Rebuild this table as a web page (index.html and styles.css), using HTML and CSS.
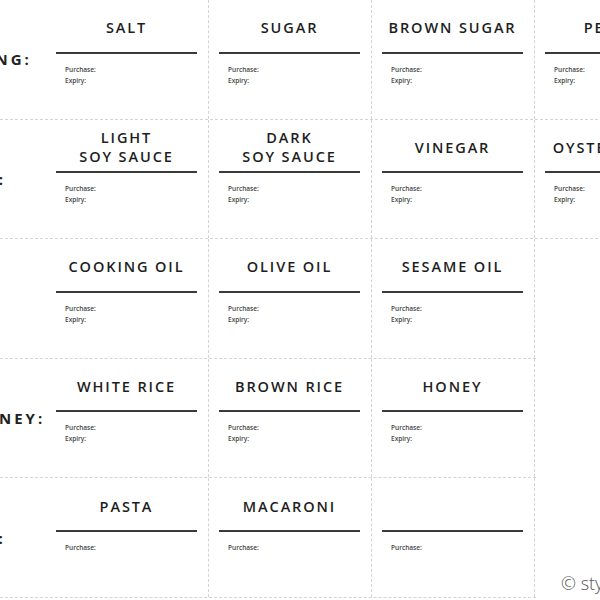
FILE: index.html
```html
<!DOCTYPE html>
<html>
<head>
<meta charset="utf-8">
<link rel="stylesheet" href="styles.css">
</head>
<body>
<div class="sheet">
  <div class="row">
    <div class="cat">SEASONING:</div>
    <div class="cell"><div class="title">SALT</div><div class="rule"></div><div class="meta">Purchase:<br>Expiry:</div></div>
    <div class="cell"><div class="title">SUGAR</div><div class="rule"></div><div class="meta">Purchase:<br>Expiry:</div></div>
    <div class="cell"><div class="title">BROWN SUGAR</div><div class="rule"></div><div class="meta">Purchase:<br>Expiry:</div></div>
    <div class="cell"><div class="title">PEPPER</div><div class="rule"></div><div class="meta">Purchase:<br>Expiry:</div></div>
  </div>
  <div class="row">
    <div class="cat">SAUCE:</div>
    <div class="cell"><div class="title">LIGHT<br>SOY SAUCE</div><div class="rule"></div><div class="meta">Purchase:<br>Expiry:</div></div>
    <div class="cell"><div class="title">DARK<br>SOY SAUCE</div><div class="rule"></div><div class="meta">Purchase:<br>Expiry:</div></div>
    <div class="cell"><div class="title">VINEGAR</div><div class="rule"></div><div class="meta">Purchase:<br>Expiry:</div></div>
    <div class="cell"><div class="title">OYSTER SAUCE</div><div class="rule"></div><div class="meta">Purchase:<br>Expiry:</div></div>
  </div>
  <div class="row short">
    <div class="cat">OIL:</div>
    <div class="cell"><div class="title">COOKING OIL</div><div class="rule"></div><div class="meta">Purchase:<br>Expiry:</div></div>
    <div class="cell"><div class="title">OLIVE OIL</div><div class="rule"></div><div class="meta">Purchase:<br>Expiry:</div></div>
    <div class="cell"><div class="title">SESAME OIL</div><div class="rule"></div><div class="meta">Purchase:<br>Expiry:</div></div>
  </div>
  <div class="row short">
    <div class="cat">RICE &amp; HONEY:</div>
    <div class="cell"><div class="title">WHITE RICE</div><div class="rule"></div><div class="meta">Purchase:<br>Expiry:</div></div>
    <div class="cell"><div class="title">BROWN RICE</div><div class="rule"></div><div class="meta">Purchase:<br>Expiry:</div></div>
    <div class="cell"><div class="title">HONEY</div><div class="rule"></div><div class="meta">Purchase:<br>Expiry:</div></div>
  </div>
  <div class="row short">
    <div class="cat">PASTA:</div>
    <div class="cell"><div class="title">PASTA</div><div class="rule"></div><div class="meta">Purchase:</div></div>
    <div class="cell"><div class="title">MACARONI</div><div class="rule"></div><div class="meta">Purchase:</div></div>
    <div class="cell"><div class="title"></div><div class="rule"></div><div class="meta">Purchase:</div></div>
  </div>
</div>
<div class="credit">© stylishcravings</div>
</body>
</html>
```
FILE: styles.css
```css
html, body {
  margin: 0;
  padding: 0;
  width: 600px;
  height: 600px;
  overflow: hidden;
  background: #fff;
}
body {
  position: relative;
  font-family: "Open Sans", "Liberation Sans", sans-serif;
  color: #222;
}
.sheet {
  display: flex;
  flex-direction: column;
}
.row {
  display: flex;
  flex-shrink: 0;
  width: 698px;
  height: 119.6px;
  box-sizing: border-box;
  border-bottom: 1px dashed #d4d4d4;
}
.row.short {
  width: 536px;
}
.cat {
  flex: 0 0 150px;
  margin-left: -104px;
  display: flex;
  align-items: center;
  justify-content: center;
  font-weight: 700;
  font-size: 15px;
  letter-spacing: 3px;
  white-space: nowrap;
  color: #222;
}
.cell {
  flex: 0 0 163px;
  box-sizing: border-box;
  border-right: 1px dashed #d4d4d4;
  padding: 4px 11px 0 10px;
  display: flex;
  flex-direction: column;
}
.title {
  height: 47.5px;
  display: flex;
  align-items: center;
  justify-content: center;
  text-align: center;
  font-size: 14.5px;
  font-weight: 600;
  letter-spacing: 1.9px;
  line-height: 19px;
  white-space: nowrap;
  color: #1e1e1e;
}
.rule {
  height: 2px;
  background: #3a3a3a;
}
.meta {
  margin-top: 10px;
  padding-left: 9px;
  font-size: 6.5px;
  line-height: 11px;
  font-weight: 600;
  color: #444;
}
.credit {
  position: absolute;
  left: 561px;
  top: 571px;
  font-size: 18px;
  font-weight: 300;
  color: #555;
  white-space: nowrap;
}
```
